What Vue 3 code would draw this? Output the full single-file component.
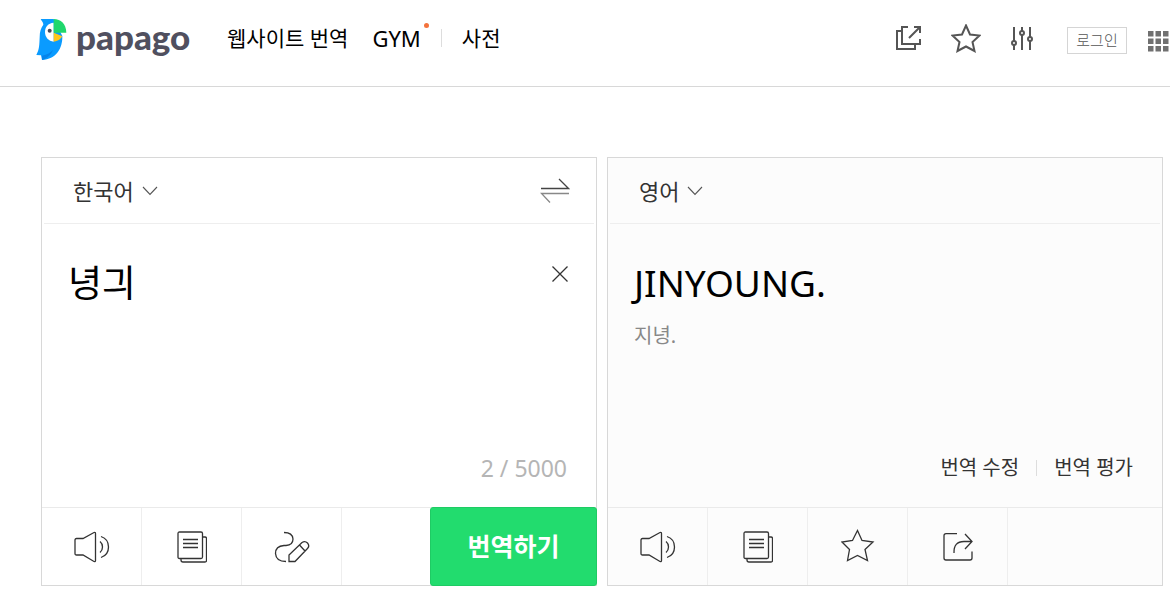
<script setup>
import { ref, computed } from 'vue'

const source = ref('녕긔')
const count = computed(() => `${source.value.length} / 5000`)
const dots = [0, 1, 2].flatMap((r) => [0, 1, 2].map((c) => ({ x: c * 7.5, y: r * 7.5 })))
</script>

<template>
  <div class="page">
    <header class="top">
      <a class="logo" href="#" aria-label="papago">
        <svg class="bird" viewBox="48 54 93 129" aria-hidden="true">
          <path fill="#0a9bff" d="M62 57H101L127 108C128 146 108 178 66 180L63 166L49 165C58 148 58 136 59 112C59 94 63 83 70 74C70 66 65 64 62 57Z" />
          <path fill="#0784ea" d="M66 167C82 164 92 158 99 150C94 162 84 174 66 180Z" />
          <path fill="#fff" d="M101 68C84 69 75 81 75 96C75 112 86 124 101 125Z" />
          <path fill="#1fd76c" d="M101 57C123 57 138 72 139 98H101Z" />
          <path fill="#ffc61a" d="M101 98L127 109C122 118 113 124 101 125Z" />
          <circle cx="89" cy="92" r="6" fill="#44485a" />
        </svg>
        <span class="wordmark">papago</span>
      </a>
      <nav class="menu">
        <a href="#">웹사이트 번역</a>
        <a href="#" class="gym">GYM<i class="dot"></i></a>
        <i class="bar"></i>
        <a href="#">사전</a>
      </nav>
      <div class="tools">
        <button type="button" class="ic" aria-label="새 창">
          <svg width="26" height="26" viewBox="0 0 26 26" class="bold"><path d="M12 2H6V19H24V14M18 2H24V8M13 13L24 2M6 6H1V24H19V19" /></svg>
        </button>
        <button type="button" class="ic star" aria-label="즐겨찾기">
          <svg width="30" height="29" viewBox="0 0 30 29" class="bold"><path d="M15 1.500L19 10.500L28.500 11.500L21.500 18L23.500 27L15 22.500L6.500 27L8.500 18L1.500 11.500L11 10.500Z" /></svg>
        </button>
        <button type="button" class="ic sliders" aria-label="설정">
          <svg width="22" height="25" viewBox="0 0 22 25" class="bold"><path d="M3 1V15M3 19V24M11 1V5M11 9V24M19 1V11M19 15V24" /><circle cx="3" cy="17" r="2" /><circle cx="11" cy="7" r="2" /><circle cx="19" cy="13" r="2" /></svg>
        </button>
        <button type="button" class="login">로그인</button>
        <button type="button" class="ic grid" aria-label="서비스 더보기">
          <svg width="21" height="21" viewBox="0 0 21 21"><rect v-for="(d, i) in dots" :key="i" :x="d.x" :y="d.y" width="5.5" height="5.5" fill="#707070" /></svg>
        </button>
      </div>
    </header>

    <main class="panels">
      <section class="panel">
        <div class="head">
          <button type="button" class="lang">한국어<svg width="16" height="10" viewBox="0 0 16 10"><path d="M1 1L8 8.500L15 1" /></svg></button>
          <button type="button" class="ic" aria-label="언어 바꾸기">
            <svg width="30" height="26" viewBox="0 0 30 26"><path d="M1 10.500H28.500L19 1" stroke="#444" /><path d="M29 15.500H1.500L10 24.500" stroke="#888" /></svg>
          </button>
        </div>
        <div class="body">
          <div class="entry">
            <textarea v-model="source" aria-label="번역할 내용" spellcheck="false"></textarea>
            <button type="button" class="ic clear" aria-label="지우기">
              <svg width="18" height="18" viewBox="0 0 18 18"><path d="M1.500 1.500L16.500 16.500M16.500 1.500L1.500 16.500" /></svg>
            </button>
          </div>
          <p class="count">{{ count }}</p>
        </div>
        <div class="foot">
          <button type="button" class="cell" aria-label="듣기">
            <svg width="36" height="32" viewBox="0 0 36 32"><path d="M2.500 7.500H9L20 1.500Q21.500 1 21.500 2.500V29.500Q21.500 31 20 30.500L9 24H2.500Q1 24 1 22.500V9Q1 7.500 2.500 7.500ZM26 10.500Q28.500 12.500 28.500 16Q28.500 19.500 26 21.500M27 5.500Q34.500 8 34.500 16Q34.500 24 27 26.500" /></svg>
          </button>
          <button type="button" class="cell" aria-label="사전">
            <svg width="30" height="32" viewBox="0 0 30 32"><path d="M2.500 1H24Q25.500 1 25.500 2.500V26Q25.500 27.500 24 27.500H2.500Q1 27.500 1 26V2.500Q1 1 2.500 1ZM25.500 6H28Q29.500 6 29.500 7.500V29.500Q29.500 31 28 31H6Q4 31 4 29V27.500M6 8.500H21M6 12.500H21M6 16.500H21" /></svg>
          </button>
          <button type="button" class="cell" aria-label="필기 입력">
            <svg width="36" height="32" viewBox="0 0 36 32"><path d="M10 1.500Q18.500 1.500 19 8Q19 14 12 14.500H10Q1.500 15 1.500 22.500Q2 30.500 12 30.500M15 30.500V24L28 11.500Q31 9.500 33.500 12Q36 15 33.500 17.500L21 30.500ZM25.500 14L31 20" /></svg>
          </button>
          <button type="button" class="translate">번역하기</button>
        </div>
      </section>

      <section class="panel result">
        <div class="head">
          <button type="button" class="lang">영어<svg width="16" height="10" viewBox="0 0 16 10"><path d="M1 1L8 8.500L15 1" /></svg></button>
        </div>
        <div class="body">
          <p class="output">JINYOUNG.</p>
          <p class="reading">지녕.</p>
          <div class="links"><a href="#">번역 수정</a><i class="bar"></i><a href="#">번역 평가</a></div>
        </div>
        <div class="foot">
          <button type="button" class="cell" aria-label="듣기">
            <svg width="36" height="32" viewBox="0 0 36 32"><path d="M2.500 7.500H9L20 1.500Q21.500 1 21.500 2.500V29.500Q21.500 31 20 30.500L9 24H2.500Q1 24 1 22.500V9Q1 7.500 2.500 7.500ZM26 10.500Q28.500 12.500 28.500 16Q28.500 19.500 26 21.500M27 5.500Q34.500 8 34.500 16Q34.500 24 27 26.500" /></svg>
          </button>
          <button type="button" class="cell" aria-label="복사">
            <svg width="30" height="32" viewBox="0 0 30 32"><path d="M2.500 1H24Q25.500 1 25.500 2.500V26Q25.500 27.500 24 27.500H2.500Q1 27.500 1 26V2.500Q1 1 2.500 1ZM25.500 6H28Q29.500 6 29.500 7.500V29.500Q29.500 31 28 31H6Q4 31 4 29V27.500M6 8.500H21M6 12.500H21M6 16.500H21" /></svg>
          </button>
          <button type="button" class="cell" aria-label="즐겨찾기">
            <svg width="34" height="36" viewBox="0 0 34 36"><path d="M16.500 1.500L21 11.500L32 13L24 20.500L26.500 31.500L16.500 26.500L6.500 31.500L8.500 20.500L1 13L11.500 11.500Z" /></svg>
          </button>
          <button type="button" class="cell" aria-label="공유">
            <svg width="30" height="28" viewBox="0 0 30 28"><path d="M14 .7H3Q1 .7 1 2.700V25Q1 27 3 27H27Q29 27 29 25V18.500M11 20Q10.500 8.500 21 8.500H29M22 1L29 8.500L22 16" /></svg>
          </button>
        </div>
      </section>
    </main>
  </div>
</template>

<style>
body { margin: 0; background: #fff; }
</style>

<style scoped>
.page { font-family: "Noto Sans", "Noto Sans CJK KR", sans-serif; color: #000; }
button { border: 0; padding: 0; background: none; font: inherit; color: inherit; cursor: pointer; }
a { color: inherit; text-decoration: none; }
p { margin: 0; }
svg { display: block; fill: none; stroke: #333; stroke-width: 1.3; }
svg.bold { stroke: #555; stroke-width: 2; }
.bird, .grid svg { stroke: none; }
.ic { flex: none; }

.top { display: flex; align-items: center; height: 78px; padding: 0 1px 8px 36px; border-bottom: 1px solid #d8d8d8; }
.logo { display: flex; align-items: center; gap: 9px; width: 155px; }
.bird { width: 31px; height: 43px; flex: none; }
.wordmark { font-family: "Lato", sans-serif; font-weight: 900; font-size: 35px; line-height: 36px; padding-bottom: 6px; color: #50505f; }
.menu { display: flex; align-items: center; font-size: 21px; line-height: 30px; margin-left: 36px; padding-bottom: 2px; white-space: nowrap; }
.gym { position: relative; margin-left: 24px; font-size: 22px; }
.dot { position: absolute; top: 0; right: -8px; width: 5px; height: 5px; border-radius: 50%; background: #f4733d; }
.bar { width: 1px; height: 18px; background: #ddd; }
.menu .bar { margin: 0 20px; }
.tools { display: flex; align-items: center; margin-left: auto; }
.tools .ic:not(.grid) { padding-bottom: 2px; }
.star { margin-left: 29px; }
.sliders { margin-left: 30px; }
.login { margin-left: 34px; margin-top: 2px; width: 60px; height: 27px; border: 1px solid #d5d5d5; font-size: 15px; line-height: 24px; font-weight: 300; color: #555; }
.grid { margin-left: 21px; padding-top: 4px; }

.panels { display: grid; grid-template-columns: 1fr 1fr; gap: 10px; padding: 70px 7px 6px 41px; }
.panel { display: flex; flex-direction: column; border: 1px solid #d8d8d8; min-width: 0; }
.result { background: #fcfcfc; }
.head { display: flex; align-items: center; justify-content: space-between; height: 65px; padding: 0 24px 0 29px; margin: 0 2px; border-bottom: 1px solid #eee; }
.lang { display: flex; align-items: center; gap: 8px; font-size: 22px; line-height: 32px; color: #333; }
.lang svg { stroke: #555; stroke-width: 1.1; }
.body { display: flex; flex-direction: column; height: 283px; box-sizing: border-box; padding: 32px 29px 23px 26px; }
.entry { display: flex; flex: 1; align-items: flex-start; }
textarea { flex: 1; min-width: 0; height: 100%; box-sizing: border-box; border: 0; padding: 0; resize: none; outline: 0; background: none; font: inherit; font-size: 37px; line-height: 54px; color: #000; }
.clear { margin-top: 9px; margin-right: -2px; }
.count { text-align: right; font-size: 23px; line-height: 32px; color: #b5b5b5; }
.output { font-size: 37px; line-height: 54px; }
.reading { font-size: 20px; line-height: 30px; margin-top: 11px; color: #888; }
.links { display: flex; align-items: center; justify-content: flex-end; gap: 17px; margin-top: auto; font-size: 20px; line-height: 32px; color: #333; }
.links .bar { height: 16px; }
.foot { display: flex; height: 77px; border-top: 1px solid #eaeaea; }
.cell { display: flex; align-items: center; justify-content: center; width: 100px; box-sizing: border-box; border-right: 1px solid #eee; }
.translate { width: 167px; margin: -1px -1px -1px auto; padding-bottom: 4px; border: 1px solid #1fcb64; border-radius: 3px; background: #22dc6e; color: #fff; font-size: 25px; font-weight: 700; }
</style>
